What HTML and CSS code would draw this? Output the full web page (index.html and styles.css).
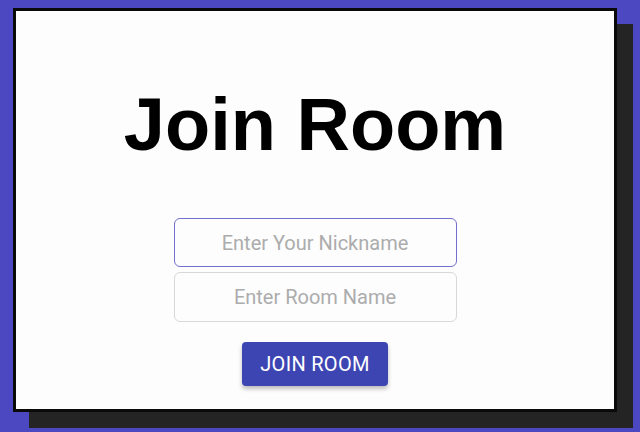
FILE: index.html
```html
<!DOCTYPE html>
<html>
<head>
<meta charset="utf-8">
<link rel="stylesheet" href="styles.css">
</head>
<body>
<div class="page">
  <div class="card">
    <h1 class="title">Join Room</h1>
    <form class="form">
      <input class="field field-focus" type="text" placeholder="Enter Your Nickname">
      <input class="field" type="text" placeholder="Enter Room Name">
      <button class="btn" type="button">JOIN ROOM</button>
    </form>
  </div>
</div>
</body>
</html>
```

FILE: styles.css
```css
html, body {
  margin: 0;
  padding: 0;
}
body {
  background: #4c48c1;
  width: 640px;
  height: 432px;
  overflow: hidden;
}
.page {
  padding: 8px 0 0 13px;
}
.card {
  box-sizing: border-box;
  width: 604px;
  height: 404px;
  border: 3px solid #0a0a0a;
  background: #fdfdfe;
  box-shadow: 16px 16px 0 #242424;
  display: flex;
  flex-direction: column;
  align-items: center;
  padding-top: 77px;
}
.title {
  margin: 0;
  font-family: "Liberation Sans", Arial, sans-serif;
  font-weight: bold;
  font-size: 74px;
  line-height: 74px;
  color: #000;
}
.form {
  margin-top: 56px;
  display: flex;
  flex-direction: column;
  align-items: center;
}
.field {
  box-sizing: border-box;
  width: 283px;
  height: 50px;
  border: 1px solid #d8d8dc;
  border-radius: 6px;
  background: #fdfdfe;
  text-align: center;
  font-family: Roboto, "Liberation Sans", sans-serif;
  font-size: 20px;
  color: #333;
  outline: none;
  margin-bottom: 5px;
}
.field::placeholder {
  color: #acacac;
}
.field-focus {
  border: 1.5px solid #7270cc;
  height: 49px;
}
.btn {
  margin-top: 15px;
  width: 146px;
  height: 44px;
  border: none;
  border-radius: 4px;
  background: #3d45b3;
  color: #fff;
  font-family: Roboto, "Liberation Sans", sans-serif;
  font-weight: 400;
  font-size: 20px;
  letter-spacing: 0.3px;
  box-shadow: 0 3px 4px rgba(0,0,0,0.25);
  cursor: pointer;
}
```
